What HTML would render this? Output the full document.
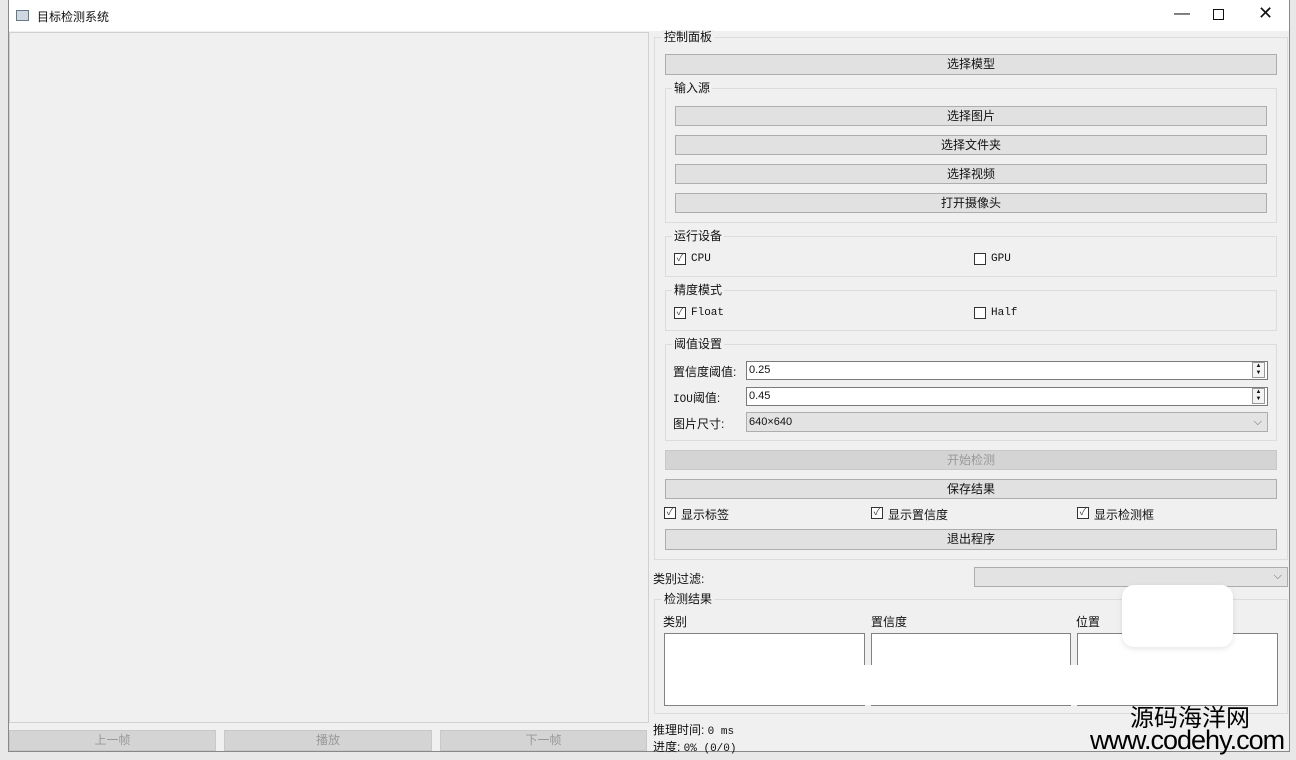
<!DOCTYPE html><html><head><meta charset="utf-8"><style>
*{margin:0;padding:0;box-sizing:border-box}
body{width:1296px;height:760px;background:#e8e8e8;position:relative;overflow:hidden;font-family:"Liberation Sans","Noto Sans CJK SC",sans-serif;font-size:12px;color:#111}
.a{position:absolute}
.btn{position:absolute;background:#e1e1e1;border:1px solid #adadad;text-align:center;font-size:12px;line-height:18px}
.dis{color:#999;background:#d4d4d4;border-color:#c8c8c8}
.grp{position:absolute;border:1px solid #dcdcdc}
.lbl{position:absolute;background:#f0f0f0;padding:0 2px;font-size:12px;line-height:14px}
.cb{position:absolute;width:12px;height:12px;border:1px solid #333;background:#fff;font-size:10px;line-height:10px;text-align:center;color:#444}
.mono{font-family:"Liberation Mono","Noto Sans CJK SC",monospace;font-size:11px}
.in{position:absolute;background:#fff;border:1px solid #7a7a7a;font-size:11px;line-height:16px;padding-left:2px}
.list{position:absolute;background:#fff;border:1px solid #828282}
</style></head><body>
<div class="a" style="left:8px;top:0;width:1282px;height:752px;background:#f0f0f0;border:1px solid #888"></div>
<div class="a" style="left:9px;top:0;width:1280px;height:31px;background:#fff"></div>
<div class="a" style="left:16px;top:10px;width:13px;height:11px;border:1px solid #678;background:#cfd8e0"></div>
<div class="a" style="left:37px;top:8px;font-size:12px">目标检测系统</div>
<div class="a" style="left:1174px;top:5px;font-size:16px">—</div>
<div class="a" style="left:1213px;top:9px;width:11px;height:11px;border:1px solid #111"></div>
<div class="a" style="left:1258px;top:3px;font-size:18px">✕</div>
<div class="a" style="left:9px;top:32px;width:640px;height:691px;border:1px solid #d0d0d0;background:#f0f0f0"></div>
<div class="btn dis" style="left:9px;top:730px;width:207px;height:21px">上一帧</div>
<div class="btn dis" style="left:224px;top:730px;width:208px;height:21px">播放</div>
<div class="btn dis" style="left:440px;top:730px;width:207px;height:21px">下一帧</div>

<div class="grp" style="left:654px;top:37px;width:634px;height:523px"></div>
<div class="lbl" style="left:662px;top:30px">控制面板</div>
<div class="btn" style="left:665px;top:54px;width:612px;height:21px">选择模型</div>
<div class="grp" style="left:665px;top:88px;width:612px;height:135px"></div>
<div class="lbl" style="left:672px;top:81px">输入源</div>
<div class="btn" style="left:675px;top:106px;width:592px;height:20px">选择图片</div>
<div class="btn" style="left:675px;top:135px;width:592px;height:20px">选择文件夹</div>
<div class="btn" style="left:675px;top:164px;width:592px;height:20px">选择视频</div>
<div class="btn" style="left:675px;top:193px;width:592px;height:20px">打开摄像头</div>

<div class="grp" style="left:665px;top:236px;width:612px;height:41px"></div>
<div class="lbl" style="left:672px;top:229px">运行设备</div>
<div class="cb" style="left:674px;top:253px">✓</div><div class="a mono" style="left:691px;top:253px">CPU</div>
<div class="cb" style="left:974px;top:253px"></div><div class="a mono" style="left:991px;top:253px">GPU</div>
<div class="grp" style="left:665px;top:290px;width:612px;height:41px"></div>
<div class="lbl" style="left:672px;top:283px">精度模式</div>
<div class="cb" style="left:674px;top:307px">✓</div><div class="a mono" style="left:691px;top:307px">Float</div>
<div class="cb" style="left:974px;top:307px"></div><div class="a mono" style="left:991px;top:307px">Half</div>

<div class="grp" style="left:665px;top:344px;width:612px;height:97px"></div>
<div class="lbl" style="left:672px;top:337px">阈值设置</div>
<div class="a" style="left:673px;top:363px">置信度阈值:</div>
<div class="in" style="left:746px;top:361px;width:522px;height:19px">0.25</div>
<div class="a" style="left:1252px;top:362px;width:13px;height:16px;border:1px solid #999;font-size:6px;line-height:7px;text-align:center;background:#f4f4f4">▲<br>▼</div>
<div class="a" style="left:673px;top:389px"><span class="mono">IOU</span>阈值:</div>
<div class="in" style="left:746px;top:387px;width:522px;height:19px">0.45</div>
<div class="a" style="left:1252px;top:388px;width:13px;height:16px;border:1px solid #999;font-size:6px;line-height:7px;text-align:center;background:#f4f4f4">▲<br>▼</div>
<div class="a" style="left:673px;top:415px">图片尺寸:</div>
<div class="in" style="left:746px;top:412px;width:522px;height:20px;background:#e3e3e3;border-color:#adadad;line-height:18px">640×640<span style="position:absolute;right:5px;color:#666">⌵</span></div>

<div class="btn dis" style="left:665px;top:450px;width:612px;height:20px">开始检测</div>
<div class="btn" style="left:665px;top:479px;width:612px;height:20px">保存结果</div>
<div class="cb" style="left:664px;top:507px">✓</div><div class="a" style="left:681px;top:506px">显示标签</div>
<div class="cb" style="left:871px;top:507px">✓</div><div class="a" style="left:888px;top:506px">显示置信度</div>
<div class="cb" style="left:1077px;top:507px">✓</div><div class="a" style="left:1094px;top:506px">显示检测框</div>
<div class="btn" style="left:665px;top:529px;width:612px;height:21px">退出程序</div>

<div class="a" style="left:653px;top:570px">类别过滤:</div>
<div class="in" style="left:974px;top:567px;width:314px;height:20px;background:#e3e3e3;border-color:#adadad"><span style="position:absolute;right:5px;color:#666">⌵</span></div>
<div class="grp" style="left:654px;top:599px;width:634px;height:115px"></div>
<div class="lbl" style="left:662px;top:592px">检测结果</div>
<div class="a" style="left:663px;top:613px">类别</div>
<div class="a" style="left:871px;top:613px">置信度</div>
<div class="a" style="left:1076px;top:613px">位置</div>
<div class="list" style="left:664px;top:633px;width:201px;height:73px"></div>
<div class="list" style="left:871px;top:633px;width:200px;height:73px"></div>
<div class="list" style="left:1077px;top:633px;width:201px;height:73px"></div>
<div class="a" style="left:820px;top:665px;width:360px;height:40px;background:#fff"></div>
<div class="a" style="left:1122px;top:585px;width:111px;height:62px;background:#fff;border-radius:12px;box-shadow:0 2px 6px rgba(0,0,0,.1)"></div>
<div class="a" style="left:653px;top:721px">推理时间: <span class="mono">0 ms</span></div>
<div class="a" style="left:653px;top:738px">进度: <span class="mono">0% (0/0)</span></div>
<div class="a" style="left:1130px;top:704px;font-size:24px;line-height:30px;color:#000">源码海洋网</div>
<div class="a" style="left:1090px;top:725px;font-size:27px;line-height:30px;color:#000;letter-spacing:-1px">www.codehy.com</div>
</body></html>
